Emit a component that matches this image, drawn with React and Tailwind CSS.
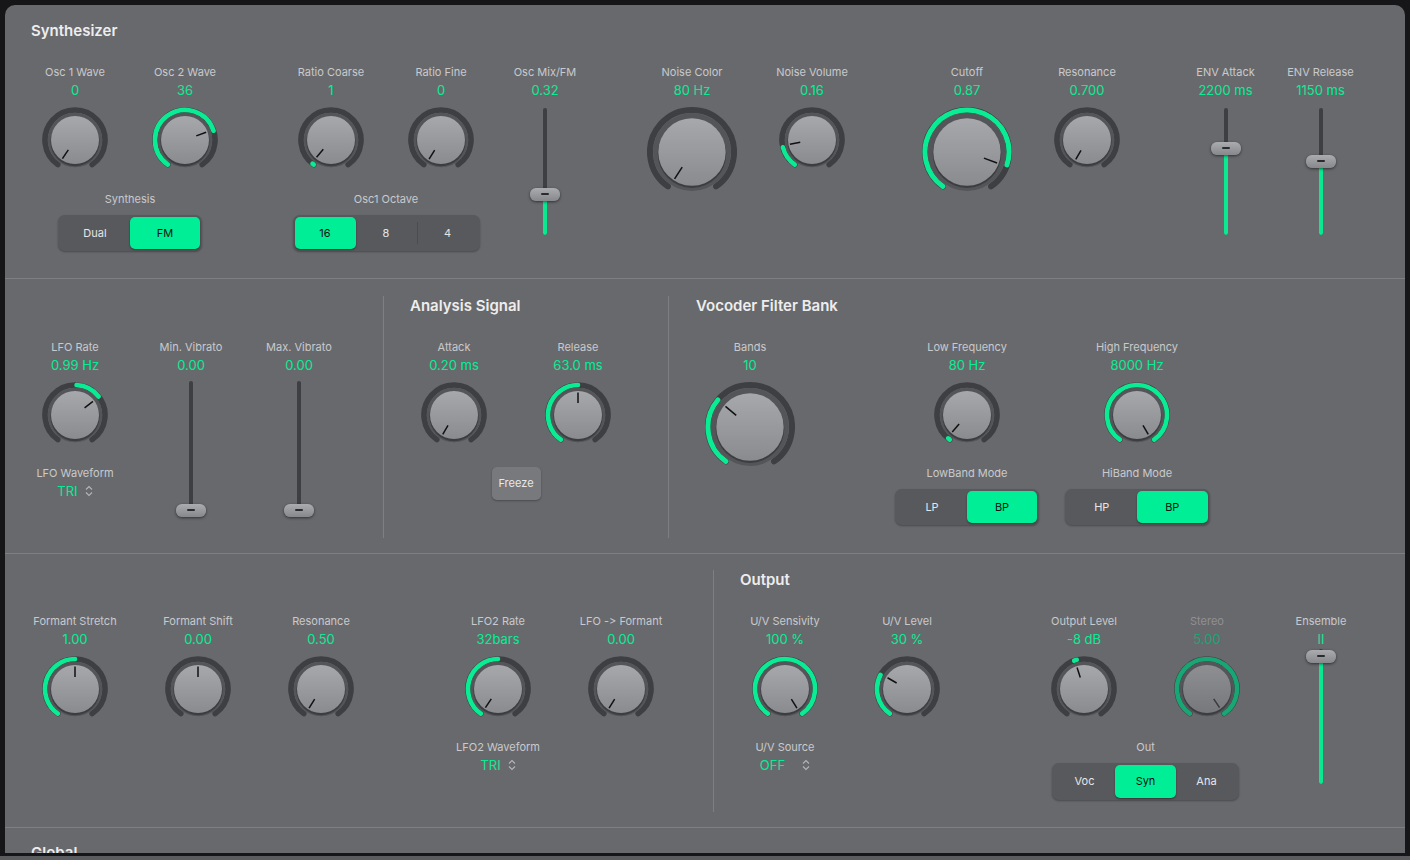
import { useId } from "react";

const G = "#0aec94";

function arcPath(cx, cy, r, a1, a2) {
	const rad = a => (a * Math.PI) / 180;
	const x1 = cx + r * Math.sin(rad(a1));
	const y1 = cy - r * Math.cos(rad(a1));
	const x2 = cx + r * Math.sin(rad(a2));
	const y2 = cy - r * Math.cos(rad(a2));
	const large = a2 - a1 > 180 ? 1 : 0;
	return `M${x1} ${y1} A${r} ${r} 0 ${large} 1 ${x2} ${y2}`;
}

function Knob({ big, arc, ptr, dim }) {
	const id = "k" + useId().replace(/[^a-zA-Z0-9]/g, "");
	const s = big ? 90 : 66;
	const c = s / 2;
	const r = big ? 42 : 30;
	const sw = big ? 6 : 5.6;
	const bez = big ? 39 : 27.2;
	const face = big ? 33.7 : 24;
	const p1 = big ? 18 : 12;
	const p2 = big ? 32 : 22.5;
	const a = (ptr * Math.PI) / 180;
	return (
		<svg width={s} height={s} viewBox={`0 0 ${s} ${s}`}>
			<defs>
				<linearGradient id={id} x1="0" y1="0" x2="0" y2="1">
					<stop offset="0" stopColor={dim ? "#8e8f93" : "#a7a8ac"} />
					<stop offset="1" stopColor={dim ? "#77787c" : "#8a8b8f"} />
				</linearGradient>
			</defs>
			<path d={arcPath(c, c, r, -145, 145)} stroke="#3e3f42" strokeWidth={sw} fill="none" strokeLinecap="round" />
			{arc && (
				<path
					d={arcPath(c, c, r, arc[0], arc[1])}
					stroke={dim ? "#17a674" : G}
					strokeWidth={sw - 1}
					fill="none"
					strokeLinecap="round"
				/>
			)}
			<circle cx={c} cy={c} r={bez} fill="#545559" />
			<circle cx={c} cy={c + 1.6} r={face + 0.6} fill="rgba(0,0,0,0.28)" />
			<circle cx={c} cy={c} r={face} fill={`url(#${id})`} />
			<line
				x1={c + p1 * Math.sin(a)}
				y1={c - p1 * Math.cos(a)}
				x2={c + p2 * Math.sin(a)}
				y2={c - p2 * Math.cos(a)}
				stroke={dim ? "#3a3a3c" : "#111"}
				strokeWidth="1.5"
			/>
		</svg>
	);
}

function Head({ label, value, dim }) {
	return (
		<>
			<div className={`text-[11px] leading-[14px] whitespace-nowrap ${dim ? "text-[#8f9093]" : "text-[#c9cacc]"}`}>{label}</div>
			<div className={`mt-[3px] text-[13px] leading-[16px] whitespace-nowrap ${dim ? "text-[#1aa574]" : "text-[#0aec94]"}`}>{value}</div>
		</>
	);
}

function KnobCol({ label, value, w, big, arc, ptr, dim, className = "", children }) {
	return (
		<div className={`flex flex-col items-center ${w} ${className}`}>
			<Head label={label} value={value} dim={dim} />
			<div className="mt-[9px]">
				<Knob big={big} arc={arc} ptr={ptr} dim={dim} />
			</div>
			{children}
		</div>
	);
}

function Slider({ h, top, bottom, pos }) {
	return (
		<div className={`relative w-[30px] ${h}`}>
			<div className="absolute left-[13px] w-[4px] rounded-full bg-[#3e3f42]" style={{ top, height: bottom - top }} />
			<div className="absolute left-[13px] w-[4px] rounded-full bg-[#0ae890]" style={{ top: pos, height: bottom - pos }} />
			<div
				className="absolute left-0 w-[30px] h-[13px] rounded-[6px] bg-gradient-to-b from-[#abacb0] to-[#87888c] shadow-[0_1px_3px_rgba(0,0,0,0.55)] flex items-center justify-center"
				style={{ top: pos - 6.5 }}
			>
				<div className="w-[8px] h-[2px] bg-[#2b2b2d] rounded-full" />
			</div>
		</div>
	);
}

function SliderCol({ label, value, w, className = "", mt, ...rest }) {
	return (
		<div className={`flex flex-col items-center ${w} ${className}`}>
			<Head label={label} value={value} />
			<div className={mt}>
				<Slider {...rest} />
			</div>
		</div>
	);
}

function Seg({ items, active, w, h }) {
	return (
		<div className={`flex p-[2px] rounded-[7px] bg-[#58595c] shadow-[0_1px_2px_rgba(0,0,0,0.3)] ${w} ${h}`}>
			{items.map((t, i) => (
				<div key={t} className="flex flex-1 items-stretch">
					{i > 0 && i !== active && i - 1 !== active && <div className="w-px h-[22px] self-center bg-[#4b4c4f]" />}
					<div
						className={`flex-1 flex items-center justify-center text-[11px] ${
							i === active
								? "bg-[#00ee96] text-[#111] rounded-[5px] shadow-[0_1px_2px_rgba(0,0,0,0.4)]"
								: "text-[#e6e6e7]"
						}`}
					>
						{t}
					</div>
				</div>
			))}
		</div>
	);
}

function Chev() {
	return (
		<svg width="8" height="12" viewBox="0 0 8 12">
			<path d="M1 4.5 L4 1.5 L7 4.5 M1 7.5 L4 10.5 L7 7.5" fill="none" stroke="#b4b5b8" strokeWidth="1.1" />
		</svg>
	);
}

function Sel({ label, value, gap }) {
	return (
		<div className="mt-[18px] flex flex-col items-center">
			<div className="text-[11px] leading-[14px] text-[#c9cacc] whitespace-nowrap">{label}</div>
			<div className={`mt-[3px] flex items-center ${gap}`}>
				<span className="text-[13px] leading-[16px] text-[#0aec94]">{value}</span>
				<Chev />
			</div>
		</div>
	);
}

function Title({ children, className = "" }) {
	return <div className={`h-[20px] text-[15px] leading-[20px] font-semibold text-[#ededee] ${className}`}>{children}</div>;
}

function SubLabel({ children }) {
	return <div className="text-[11px] leading-[14px] text-[#c9cacc]">{children}</div>;
}

export default function App() {
	return (
		<div className="w-[1410px] h-[860px] bg-[#161618] overflow-hidden flex flex-col font-['Inter','Liberation_Sans',sans-serif] [font-variant-ligatures:none] [font-feature-settings:'calt'_0]">
			<div className="ml-[5px] mt-[5px] w-[1400px] h-[848px] shrink-0 bg-[#68696d] rounded-t-[10px] overflow-hidden flex flex-col">
				{/* Synthesizer */}
				<div className="h-[274px] shrink-0 border-b border-[#7e7f83] pt-[16px]">
					<Title className="pl-[26px]">Synthesizer</Title>
					<div className="mt-[24px] pl-[15px] flex items-start">
						<div className="flex flex-col items-center">
							<div className="flex">
								<KnobCol w="w-[110px]" label="Osc 1 Wave" value="0" ptr={-146} />
								<KnobCol w="w-[110px]" label="Osc 2 Wave" value="36" arc={[-145, 72]} ptr={70} />
							</div>
							<div className="mt-[19px]"><SubLabel>Synthesis</SubLabel></div>
							<div className="mt-[9px]">
								<Seg items={["Dual", "FM"]} active={1} w="w-[144px]" h="h-[36px]" />
							</div>
						</div>
						<div className="ml-[36px] flex flex-col items-center">
							<div className="flex">
								<KnobCol w="w-[110px]" label="Ratio Coarse" value="1" arc={[-145, -142]} ptr={-140} />
								<KnobCol w="w-[110px]" label="Ratio Fine" value="0" ptr={-148} />
							</div>
							<div className="mt-[19px]"><SubLabel>Osc1 Octave</SubLabel></div>
							<div className="mt-[9px]">
								<Seg items={["16", "8", "4"]} active={0} w="w-[187px]" h="h-[36px]" />
							</div>
						</div>
						<SliderCol w="w-[90px]" className="ml-[4px]" mt="mt-[9px]" label="Osc Mix/FM" value="0.32" h="h-[130px]" top={1} bottom={128} pos={87} />
						<KnobCol w="w-[120px]" className="ml-[42px]" big label="Noise Color" value="80 Hz" ptr={-147} />
						<KnobCol w="w-[120px]" label="Noise Volume" value="0.16" arc={[-145, -104]} ptr={-101} />
						<KnobCol w="w-[120px]" className="ml-[35px]" big label="Cutoff" value="0.87" arc={[-145, 108]} ptr={110} />
						<KnobCol w="w-[120px]" label="Resonance" value="0.700" ptr={-150} />
						<SliderCol w="w-[95px]" className="ml-[31px]" mt="mt-[9px]" label="ENV Attack" value="2200 ms" h="h-[130px]" top={1} bottom={128} pos={41} />
						<SliderCol w="w-[95px]" mt="mt-[9px]" label="ENV Release" value="1150 ms" h="h-[130px]" top={1} bottom={128} pos={54} />
					</div>
				</div>

				{/* middle */}
				<div className="h-[275px] shrink-0 border-b border-[#7e7f83] pt-[17px] pb-[15px] flex">
					<div className="w-[379px] border-r border-[#7e7f83]">
						<div className="h-[20px]" />
						<div className="mt-[24px] pl-[15px] flex items-start">
							<KnobCol w="w-[110px]" label="LFO Rate" value="0.99 Hz" arc={[3, 52]} ptr={53}>
								<Sel label="LFO Waveform" value="TRI" gap="gap-[7px]" />
							</KnobCol>
							<SliderCol w="w-[100px]" className="ml-[11px]" mt="mt-[8px]" label="Min. Vibrato" value="0.00" h="h-[138px]" top={0} bottom={129} pos={129} />
							<SliderCol w="w-[100px]" className="ml-[8px]" mt="mt-[8px]" label="Max. Vibrato" value="0.00" h="h-[138px]" top={0} bottom={129} pos={129} />
						</div>
					</div>
					<div className="w-[285px] border-r border-[#7e7f83]">
						<Title className="pl-[26px]">Analysis Signal</Title>
						<div className="mt-[24px] pl-[15px] flex flex-col items-start">
							<div className="flex flex-col items-center">
								<div className="flex">
									<KnobCol w="w-[110px]" label="Attack" value="0.20 ms" ptr={-150} />
									<KnobCol w="w-[110px]" className="ml-[14px]" label="Release" value="63.0 ms" arc={[-145, 0]} ptr={0} />
								</div>
								<div className="mt-[19px] w-[49px] h-[33px] rounded-[5px] bg-[#78797d] shadow-[0_1px_2px_rgba(0,0,0,0.3)] flex items-center justify-center text-[11px] text-[#e8e8e9]">
									Freeze
								</div>
							</div>
						</div>
					</div>
					<div className="flex-1">
						<Title className="pl-[27px]">Vocoder Filter Bank</Title>
						<div className="mt-[24px] pl-[26px] flex items-start">
							<KnobCol w="w-[110px]" big label="Bands" value="10" arc={[-145, -50]} ptr={-50} />
							<KnobCol w="w-[150px]" className="ml-[87px]" label="Low Frequency" value="80 Hz" arc={[-145, -141]} ptr={-139}>
								<div className="mt-[18px]"><SubLabel>LowBand Mode</SubLabel></div>
								<div className="mt-[9px]">
									<Seg items={["LP", "BP"]} active={1} w="w-[144px]" h="h-[36px]" />
								</div>
							</KnobCol>
							<KnobCol w="w-[150px]" className="ml-[20px]" label="High Frequency" value="8000 Hz" arc={[-145, 145]} ptr={150}>
								<div className="mt-[18px]"><SubLabel>HiBand Mode</SubLabel></div>
								<div className="mt-[9px]">
									<Seg items={["HP", "BP"]} active={1} w="w-[145px]" h="h-[36px]" />
								</div>
							</KnobCol>
						</div>
					</div>
				</div>

				{/* bottom */}
				<div className="h-[274px] shrink-0 border-b border-[#7e7f83] pt-[16px] pb-[15px] flex">
					<div className="w-[709px] border-r border-[#7e7f83]">
						<div className="h-[20px]" />
						<div className="mt-[24px] pl-[10px] flex items-start">
							<KnobCol w="w-[120px]" label="Formant Stretch" value="1.00" arc={[-145, 0]} ptr={0} />
							<KnobCol w="w-[120px]" className="ml-[3px]" label="Formant Shift" value="0.00" ptr={0} />
							<KnobCol w="w-[120px]" className="ml-[3px]" label="Resonance" value="0.50" ptr={-148} />
							<KnobCol w="w-[120px]" className="ml-[57px]" label="LFO2 Rate" value="32bars" arc={[-145, 0]} ptr={-146}>
								<Sel label="LFO2 Waveform" value="TRI" gap="gap-[7px]" />
							</KnobCol>
							<KnobCol w="w-[120px]" className="ml-[3px]" label="LFO -> Formant" value="0.00" ptr={-148} />
						</div>
					</div>
					<div className="flex-1">
						<Title className="pl-[26px]">Output</Title>
						<div className="mt-[24px] pl-[11px] flex items-start">
							<KnobCol w="w-[120px]" label="U/V Sensivity" value="100 %" arc={[-145, 145]} ptr={148}>
								<Sel label="U/V Source" value="OFF" gap="gap-[17px]" />
							</KnobCol>
							<KnobCol w="w-[120px]" className="ml-[2px]" label="U/V Level" value="30 %" arc={[-145, -62]} ptr={-60} />
							<div className="ml-[57px] flex flex-col items-center">
								<div className="flex">
									<KnobCol w="w-[120px]" label="Output Level" value="-8 dB" arc={[-19, -14]} ptr={-18} />
									<KnobCol w="w-[120px]" className="ml-[3px]" dim label="Stereo" value="5.00" arc={[-145, 145]} ptr={146} />
								</div>
								<div className="mt-[18px]"><SubLabel>Out</SubLabel></div>
								<div className="mt-[9px]">
									<Seg items={["Voc", "Syn", "Ana"]} active={1} w="w-[187px]" h="h-[37px]" />
								</div>
							</div>
							<SliderCol w="w-[100px]" className="ml-[4px]" mt="mt-0" label="Ensemble" value="II" h="h-[140px]" top={2} bottom={137} pos={9} />
						</div>
					</div>
				</div>

				<div className="pt-[15px] pl-[26px]">
					<Title>Global</Title>
				</div>
			</div>
			<div className="h-[3px] shrink-0" />
			<div className="flex-1 bg-[#5b5c5f]" />
		</div>
	);
}
